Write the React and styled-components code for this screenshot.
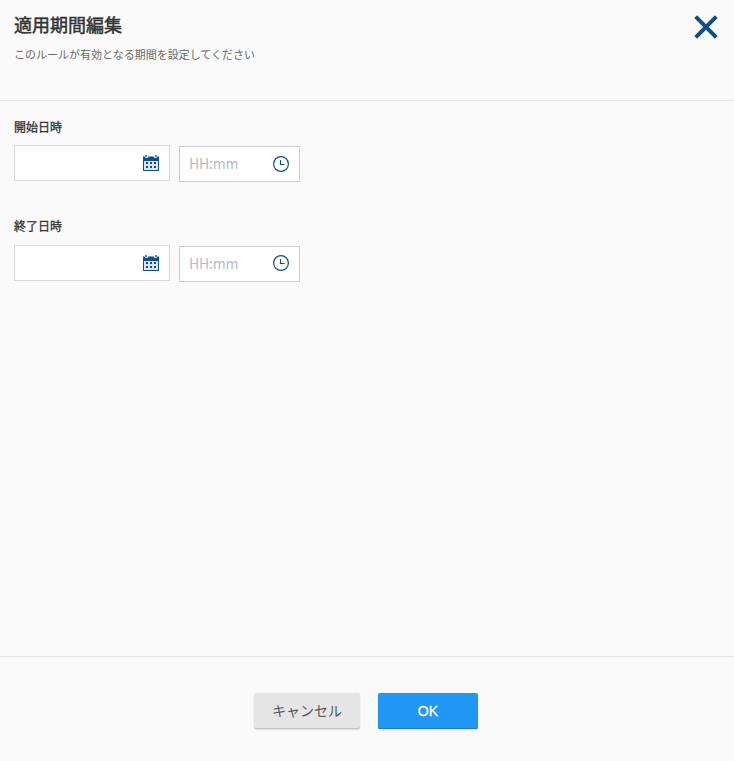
import React, { useState } from 'react'
import styled, { createGlobalStyle } from 'styled-components'

const GlobalStyle = createGlobalStyle`
* {
    box-sizing: border-box;
}

body {
    margin: 0;
    background-color: #fafafa;
    font-family: "Liberation Sans", "Noto Sans CJK JP", sans-serif;
}
`

const CalendarIcon = () => (
  <svg width="16" height="16" viewBox="0 0 16 16" fill="#124d87">
    <path d="M0 1.5h1.500L2.500 3h2L5.300 1.500h5.400L11.500 3h2l1-1.500H16V16H0z" />
    <path d="M2.300 0h1.400v2.200H2.300zM12.300 0h1.400v2.200h-1.400z" />
    <path fill="#dbe5ef" d="M1 6h14v9H1z" />
    <path d="M3 7h2v2H3zM7 7h2v2H7zM11 7h2v2h-2zM3 11h2v2H3zM7 11h2v2H7zM11 11h2v2h-2z" />
  </svg>
)

const ClockIcon = () => (
  <svg width="16" height="16" viewBox="0 0 16 16" fill="none" stroke="#124d87">
    <circle cx="8" cy="8" r="7.400" strokeWidth="1.200" />
    <path d="M7.500 4v4.500H11.500" strokeWidth="1.200" />
  </svg>
)

const CloseIcon = () => (
  <svg width="24" height="24" viewBox="0 0 24 24" stroke="#124d87" strokeWidth="4">
    <path d="M1.700 1.700l20.600 20.600M22.300 1.700L1.700 22.300" />
  </svg>
)

const DateTimeField = ({ label, labelGap, clockShift }) => {
  const [date, setDate] = useState('')
  const [time, setTime] = useState('')
  return (
    <Field>
      <Label $gap={labelGap}>{label}</Label>
      <Inputs>
        <InputBox $width={156} $border="#d8d8d8">
          <Input aria-label={`${label} 日付`} value={date} onChange={(e) => setDate(e.target.value)} />
          <IconSlot>
            <CalendarIcon />
          </IconSlot>
        </InputBox>
        <InputBox $width={121} $border="#c8cdd3" $drop>
          <Input placeholder="HH:mm" value={time} onChange={(e) => setTime(e.target.value)} />
          <IconSlot $up={clockShift}>
            <ClockIcon />
          </IconSlot>
        </InputBox>
      </Inputs>
    </Field>
  )
}

export default function App() {
  return (
    <>
      <GlobalStyle />
      <Modal>
        <Header>
          <div>
            <Title>適用期間編集</Title>
            <Description>このルールが有効となる期間を設定してください</Description>
          </div>
          <CloseButton type="button" aria-label="閉じる">
            <CloseIcon />
          </CloseButton>
        </Header>
        <Body>
          <DateTimeField label="開始日時" labelGap={8} />
          <DateTimeField label="終了日時" labelGap={9} clockShift={2} />
        </Body>
        <Footer>
          <Button type="button">キャンセル</Button>
          <Button type="button" $primary>OK</Button>
        </Footer>
      </Modal>
    </>
  )
}

const Modal = styled.div`
    display: flex;
    flex-direction: column;
    height: 761px;
    background-color: #fafafa;
    color: #333;
`

const Header = styled.header`
    display: flex;
    justify-content: space-between;
    align-items: flex-start;
    height: 101px;
    padding: 15px 16px 0 14px;
    border-bottom: 1px solid #e4e4e4;
`

const Title = styled.h1`
    margin: 0;
    font-size: 18px;
    font-weight: normal;
    line-height: 22px;
    -webkit-text-stroke: 0.5px #333;
`

const Description = styled.p`
    margin: 10px 0 0;
    font-size: 11px;
    line-height: 16px;
    color: #6a6a6a;
`

const CloseButton = styled.button`
    display: flex;
    padding: 0;
    border: none;
    background: none;
    cursor: pointer;
`

const Body = styled.main`
    flex: 1;
    padding: 18px 14px;
`

const Field = styled.div`
    margin-bottom: 36px;
`

const Label = styled.div`
    margin-bottom: ${({ $gap }) => $gap}px;
    font-size: 12px;
    font-weight: normal;
    line-height: 18px;
    -webkit-text-stroke: 0.3px #333;
`

const Inputs = styled.div`
    display: flex;
    gap: 9px;
`

const InputBox = styled.div`
    display: flex;
    align-items: center;
    width: ${({ $width }) => $width}px;
    height: 36px;
    margin-top: ${({ $drop }) => ($drop ? 1 : 0)}px;
    padding: 0 10px 0 9px;
    border: 1px solid ${({ $border }) => $border};
    background-color: #fff;
`

const Input = styled.input`
    flex: 1;
    min-width: 0;
    padding: 0 0 2px;
    border: none;
    outline: none;
    background: none;
    font-family: "Noto Sans CJK JP", sans-serif;
    font-size: 14px;
    letter-spacing: -0.2px;
    color: #333;

    &::placeholder {
        color: #b3bcc6;
        opacity: 1;
    }
`

const IconSlot = styled.span`
    display: flex;
    padding-bottom: ${({ $up }) => $up || 0}px;
`

const Footer = styled.footer`
    display: flex;
    justify-content: center;
    align-items: flex-start;
    gap: 18px;
    height: 105px;
    padding: 36px 2px 0 0;
    border-top: 1px solid #e4e4e4;
`

const Button = styled.button`
    width: ${({ $primary }) => ($primary ? 100 : 106)}px;
    height: 36px;
    padding: 0 0 ${({ $primary }) => ($primary ? 0 : 2)}px;
    border: none;
    border-radius: 2px;
    background-color: ${({ $primary }) => ($primary ? '#2196f3' : '#e5e5e5')};
    box-shadow: inset 0 -1px 0 ${({ $primary }) => ($primary ? '#1a7fd0' : '#c4c4c4')}, 0 1px 2px rgba(0, 0, 0, 0.12);
    font-family: "Liberation Sans", "Noto Sans CJK JP", sans-serif;
    font-size: 14px;
    color: ${({ $primary }) => ($primary ? '#fff' : '#555')};
    -webkit-text-stroke: ${({ $primary }) => ($primary ? '0.3px #fff' : '0')};
    letter-spacing: ${({ $primary }) => ($primary ? '0.2px' : '0')};
    cursor: pointer;
`
